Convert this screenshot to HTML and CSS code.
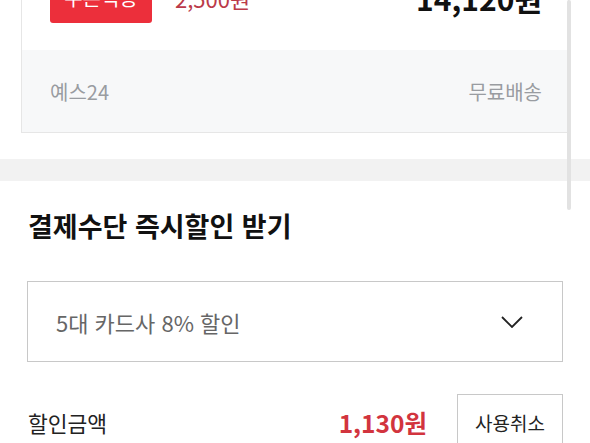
FILE: index.html
```html
<html lang="ko">

<head>
    <meta charset="UTF-8">
    <meta name="viewport" content="width=device-width, initial-scale=1.0">
    <title>결제수단 즉시할인</title>
    <link rel="stylesheet" href="styles.css">
</head>

<body>
    <div class="page">
        <!-- Seller Card -->
        <div class="seller-card">
            <div class="seller-top">
                <span class="coupon-badge">쿠폰적용</span>
                <span class="coupon-price">2,500원</span>
                <span class="final-price">14,120원</span>
            </div>
            <div class="seller-footer">
                <span>예스24</span>
                <span>무료배송</span>
            </div>
        </div>

        <div class="divider"></div>

        <!-- Instant Discount Section -->
        <section class="discount">
            <h2>결제수단 즉시할인 받기</h2>
            <div class="select-box">
                <span>5대 카드사 8% 할인</span>
                <svg class="chevron" width="22" height="12" viewBox="0 0 22 12">
                    <path d="M1 1 L11 11 L21 1" fill="none" stroke="#222" stroke-width="1.8" />
                </svg>
            </div>
            <div class="discount-row">
                <span class="label">할인금액</span>
                <span class="amount">1,130원</span>
                <button class="cancel-button">사용취소</button>
            </div>
        </section>
    </div>
    <div class="scrollbar"></div>
</body>

</html>
```

FILE: styles.css
```css
/* Global Styles */
body {
    font-family: 'Noto Sans CJK KR', 'Noto Sans', sans-serif;
    margin: 0;
    padding: 0;
    background-color: #fff;
    color: #222;
    overflow: hidden;
}

.page {
    margin-top: -27px;
}

/* Seller Card */
.seller-card {
    margin: 0 21px;
    border: 1px solid #e6e6e6;
    border-top: none;
}

.seller-top {
    display: flex;
    align-items: center;
    padding: 0 26px 27px 28px;
}

.coupon-badge {
    background-color: #ec2f3b;
    color: #fff;
    font-size: 20px;
    line-height: 50px;
    width: 102px;
    text-align: center;
    border-radius: 3px;
}

.coupon-price {
    color: #bb3a49;
    font-size: 22px;
    margin-left: 23px;
}

.final-price {
    margin-left: auto;
    font-size: 30px;
    font-weight: bold;
    color: #111;
}

.seller-footer {
    display: flex;
    justify-content: space-between;
    align-items: center;
    height: 82px;
    padding: 0 26px 0 28px;
    background-color: #f7f8f9;
    color: #999ca1;
    font-size: 20px;
}

/* Divider */
.divider {
    height: 22px;
    background-color: #f2f2f2;
    margin-top: 26px;
}

/* Discount Section */
.discount {
    padding: 0 27px;
}

.discount h2 {
    margin: 28px 0 0 1px;
    font-size: 27px;
    line-height: 34px;
    font-weight: bold;
    color: #111;
}

.select-box {
    display: flex;
    justify-content: space-between;
    align-items: center;
    height: 79px;
    margin-top: 38px;
    padding: 0 39px 0 28px;
    border: 1px solid #c8c8c8;
    color: #666;
    font-size: 22px;
}

.discount-row {
    display: flex;
    align-items: center;
    margin-top: 32px;
}

.discount-row .label {
    font-size: 21.5px;
    color: #222;
    margin-left: 1px;
}

.discount-row .amount {
    margin-left: auto;
    margin-right: 30px;
    color: #d2343e;
    font-size: 24.5px;
    font-weight: bold;
}

.cancel-button {
    width: 106px;
    height: 56px;
    border: 1px solid #c8c8c8;
    background-color: #fff;
    font-family: inherit;
    font-size: 19px;
    color: #222;
    padding: 0;
}

/* Scrollbar overlay */
.scrollbar {
    position: fixed;
    top: 0;
    right: 19px;
    width: 4px;
    height: 210px;
    background-color: #e2e2e2;
    border-radius: 2px;
}
```
